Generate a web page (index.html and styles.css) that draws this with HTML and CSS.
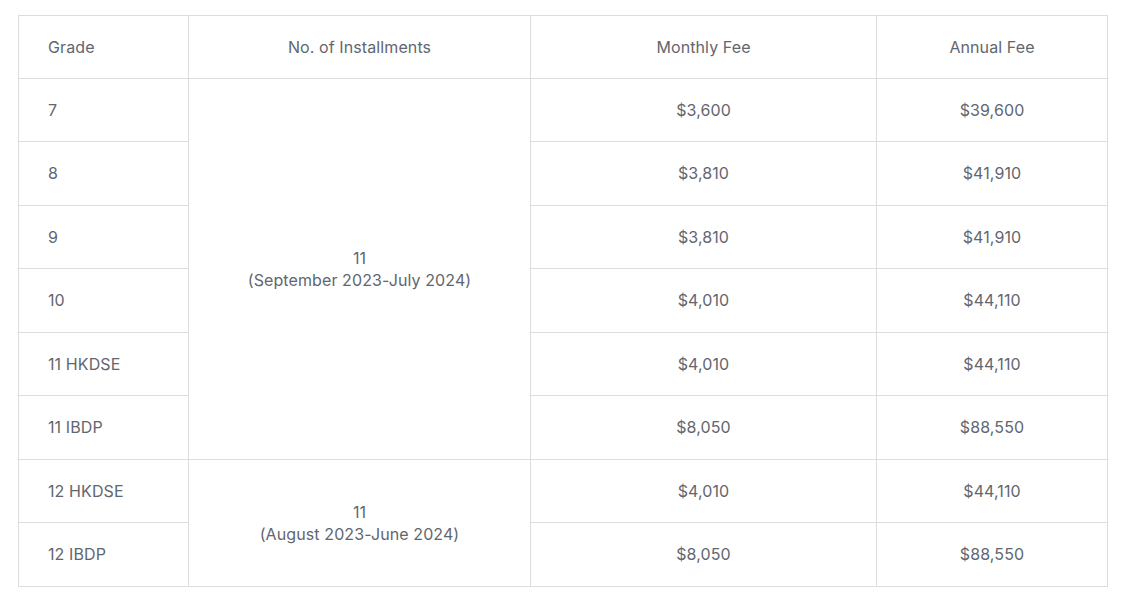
FILE: index.html
```html
<!DOCTYPE html>
<html lang="en">
<head>
<meta charset="utf-8">
<link rel="stylesheet" href="styles.css">
</head>
<body>
<table class="fees">
  <colgroup>
    <col class="c1"><col class="c2"><col class="c3"><col class="c4">
  </colgroup>
  <thead>
    <tr><th class="left">Grade</th><th>No. of Installments</th><th>Monthly Fee</th><th>Annual Fee</th></tr>
  </thead>
  <tbody>
    <tr><td class="left">7</td><td rowspan="6">11<br>(September 2023-July 2024)</td><td>$3,600</td><td>$39,600</td></tr>
    <tr><td class="left">8</td><td>$3,810</td><td>$41,910</td></tr>
    <tr><td class="left">9</td><td>$3,810</td><td>$41,910</td></tr>
    <tr><td class="left">10</td><td>$4,010</td><td>$44,110</td></tr>
    <tr><td class="left">11 HKDSE</td><td>$4,010</td><td>$44,110</td></tr>
    <tr><td class="left">11 IBDP</td><td>$8,050</td><td>$88,550</td></tr>
    <tr><td class="left">12 HKDSE</td><td rowspan="2">11<br>(August 2023-June 2024)</td><td>$4,010</td><td>$44,110</td></tr>
    <tr><td class="left">12 IBDP</td><td>$8,050</td><td>$88,550</td></tr>
  </tbody>
</table>
</body>
</html>
```
FILE: styles.css
```css
html, body {
  margin: 0;
  background: #ffffff;
}
body {
  padding: 15px 0 0 18px;
  font-family: "Inter", "Open Sans", sans-serif;
  font-size: 16px;
  letter-spacing: 0.1px;
  color: #62666e;
}
.fees {
  border-collapse: collapse;
  table-layout: fixed;
  width: 1089px;
}
.c1 { width: 170px; }
.c2 { width: 342px; }
.c3 { width: 346px; }
.c4 { width: 231px; }
.fees th, .fees td {
  border: 1px solid #dddddd;
  height: 62.5px;
  padding: 0 29px;
  text-align: center;
  vertical-align: middle;
  font-weight: 400;
  line-height: 22px;
}
.fees th {
  height: 61.5px;
}
.fees .left {
  text-align: left;
}
```
